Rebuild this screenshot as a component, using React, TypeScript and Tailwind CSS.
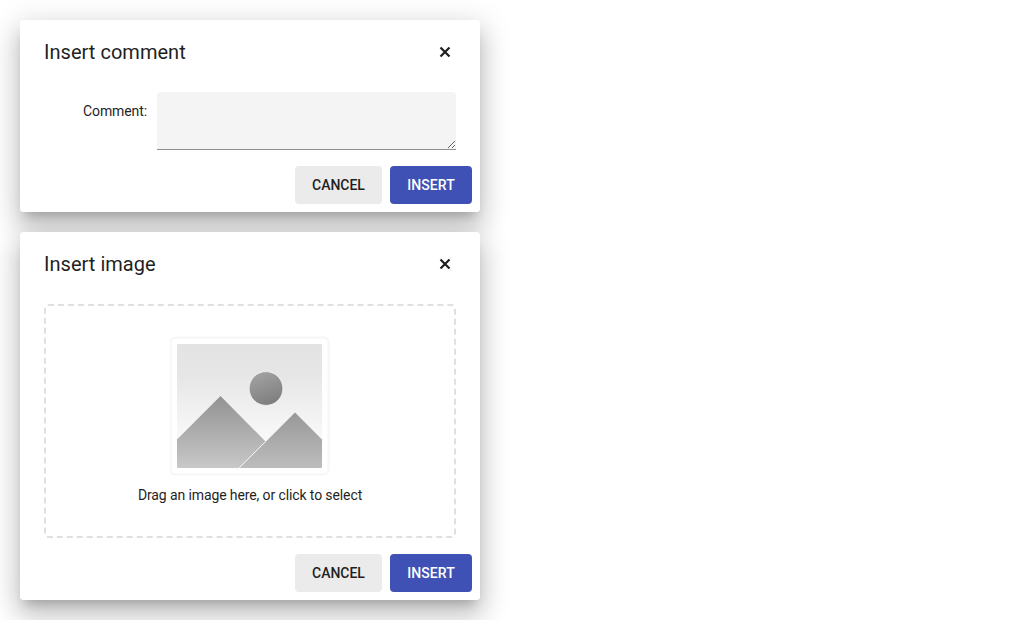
import React from "react";

const shadow =
  "before:absolute before:inset-0 before:-z-10 before:rounded before:shadow-[0px_8px_10px_-5px_rgba(0,0,0,0.2),0px_16px_24px_2px_rgba(0,0,0,0.14),0px_6px_30px_5px_rgba(0,0,0,0.12)]";

function Header({ title }: { title: string }) {
  return (
    <header className="flex h-16 shrink-0 items-center justify-between pl-6 pr-[29px]">
      <h2 className="text-[20px] leading-8 font-normal tracking-[0.03px]">{title}</h2>
      <button aria-label="Close" className="flex">
        <svg width="12" height="12" viewBox="0 0 12 12" fill="none" stroke="#1f1f1f" strokeWidth="2.2">
          <path d="M1.500 1.500 10.500 10.500M10.500 1.500 1.500 10.500" />
        </svg>
      </button>
    </header>
  );
}

function Actions() {
  return (
    <footer className="flex justify-end gap-2 p-2 text-[14px] font-medium">
      <button className="h-[38px] w-[87px] rounded bg-[#ebebeb] tracking-[-0.03px]">CANCEL</button>
      <button className="h-[38px] w-[82px] rounded bg-[#3f51b5] tracking-[0.05px] text-white">INSERT</button>
    </footer>
  );
}

function Placeholder() {
  return (
    <svg width="160" height="140" viewBox="0 0 160 140">
      <defs>
        <linearGradient id="sky" x1="0" y1="0" x2="0" y2="1">
          <stop offset="0" stopColor="#e3e3e3" />
          <stop offset="0.25" stopColor="#e6e6e6" />
          <stop offset="0.8" stopColor="#fafafa" />
        </linearGradient>
        <linearGradient id="hill" x1="0" y1="0" x2="0" y2="1">
          <stop offset="0" stopColor="#929292" />
          <stop offset="1" stopColor="#c8c8c8" />
        </linearGradient>
        <linearGradient id="hillRight" x1="0" y1="0" x2="0" y2="1">
          <stop offset="0" stopColor="#989898" />
          <stop offset="1" stopColor="#bdbdbd" />
        </linearGradient>
        <linearGradient id="sun" x1="0.3" y1="0" x2="0.7" y2="1">
          <stop offset="0" stopColor="#a2a2a2" />
          <stop offset="1" stopColor="#7c7c7c" />
        </linearGradient>
      </defs>
      <rect x="0.5" y="1.500" width="158" height="137" rx="5" fill="#fff" stroke="#f6f6f6" strokeWidth="2" />
      <rect x="7" y="8" width="145" height="124" rx="1" fill="url(#sky)" />
      <circle cx="96" cy="52.500" r="16.900" fill="url(#sun)" stroke="#f8f8f8" strokeWidth="0.800" />
      <path d="M7 103.500 50.500 60 95.500 105.500 69 132H8Q7 132 7 131Z" fill="url(#hill)" />
      <path d="M69.500 132 125 76.500 152 103.500V131Q152 132 151 132Z" fill="url(#hillRight)" />
      <path d="M69 132 95.500 105.500" stroke="#f0f0f0" />
    </svg>
  );
}

export default function App() {
  return (
    <main className="isolate flex h-[620px] flex-col gap-5 overflow-hidden bg-white p-5 font-['Roboto',sans-serif] text-[#1f1f1f]">
      <section className={`relative flex h-48 w-[460px] shrink-0 flex-col rounded bg-white ${shadow}`}>
        <Header title="Insert comment" />
        <div className="flex gap-2.5 px-6 pt-2">
          <label htmlFor="comment" className="w-[103px] pt-[9px] text-right text-[14px] leading-5 tracking-[-0.1px]">Comment:</label>
          <textarea id="comment" className="h-[58px] w-[299px] resize rounded-t border-b border-[#8f8f8f] bg-[#f4f4f4] outline-none" />
        </div>
        <div className="mt-2"><Actions /></div>
      </section>
      <section className={`relative flex h-[368px] w-[460px] shrink-0 flex-col rounded bg-white ${shadow}`}>
        <Header title="Insert image" />
        <div className="mx-6 mt-2 flex h-[234px] flex-col items-center rounded border-2 border-dashed border-[#e0e0e0] pt-[30px]">
          <Placeholder />
          <p className="mt-[9px] text-[14px] leading-5 tracking-[-0.11px]">Drag an image here, or click to select</p>
        </div>
        <div className="mt-2"><Actions /></div>
      </section>
    </main>
  );
}
